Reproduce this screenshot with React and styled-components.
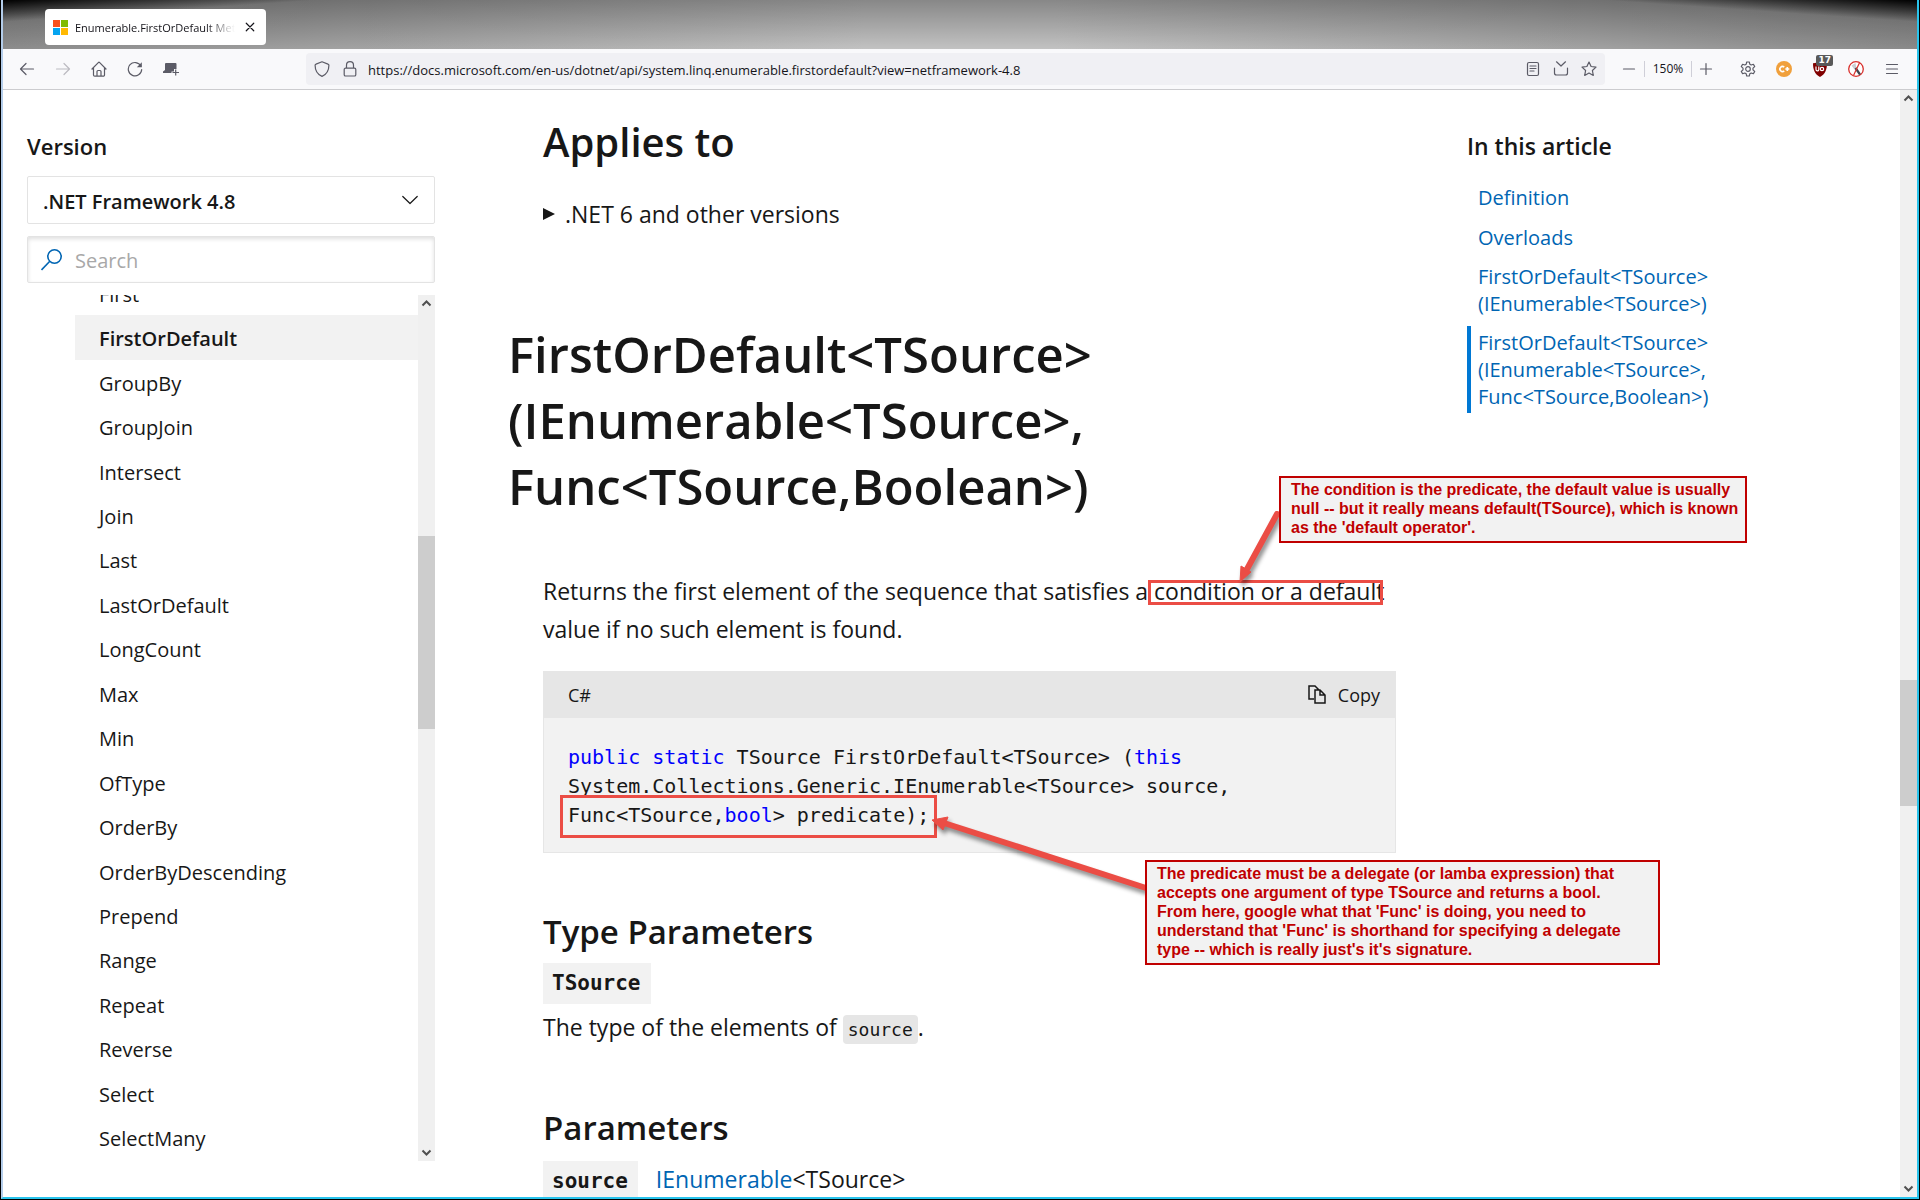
import React from "react";
import styled, { createGlobalStyle } from "styled-components";

const GlobalStyle = createGlobalStyle`
  * {
    box-sizing: border-box;
  }

  body {
    margin: 0;
    background: #000;
    color: #171717;
    font-family: "Open Sans", "Noto Sans", sans-serif;
  }

  a {
    color: #0065b3;
    text-decoration: none;
  }

  button,
  input,
  select {
    font: inherit;
    color: inherit;
  }
`;

const Desktop = styled.div`
  height: 100vh;
  padding: 0 1px 1px;
  overflow: hidden;
  background: #000;
`;

const Window = styled.div`
  height: 100%;
  display: flex;
  flex-direction: column;
  overflow: hidden;
  background: #fff;
  border-left: 2px solid #b4cdea;
  border-right: 2px solid #29c4ec;
  border-bottom: 2px solid #29c4ec;
`;

const TabStrip = styled.div`
  height: 49px;
  flex: none;
  padding: 9px 42px 4px;
  background:
    linear-gradient(176deg, #000 0, rgba(0, 0, 0, 0) 22px),
    linear-gradient(184deg, #000 0, rgba(0, 0, 0, 0) 22px),
    linear-gradient(to bottom, rgba(0, 0, 0, 0.3), rgba(0, 0, 0, 0)),
    linear-gradient(to right, #8c8c8c, #a2a2a2 18%, #c2c2c2 45%, #c2c2c2 55%, #a6a6a6 80%, #8a8a8a);
`;

const Tab = styled.div`
  width: 221px;
  height: 36px;
  padding: 0 8px;
  display: flex;
  align-items: center;
  gap: 7px;
  background: #fff;
  border-radius: 4px;
  font-size: 11px;
  color: #15141a;
`;

const TabTitle = styled.span`
  flex: 1;
  overflow: hidden;
  white-space: nowrap;
  mask-image: linear-gradient(to right, #000 82%, transparent);
`;

const IconButton = styled.button`
  width: ${(p) => p.$width || 36}px;
  height: 32px;
  padding: 0;
  flex: none;
  display: flex;
  align-items: center;
  justify-content: center;
  position: relative;
  border: 0;
  background: none;
  color: ${(p) => (p.$dim ? "#bcbbc1" : "#5b5b66")};
`;

const Toolbar = styled.div`
  height: 41px;
  flex: none;
  display: flex;
  align-items: center;
  padding: 0 7px 0 6px;
  background: #f9f9fb;
  border-bottom: 1px solid #cccccf;
`;

const AddressBar = styled.div`
  flex: 1;
  height: 32px;
  margin-left: 117px;
  margin-right: 8px;
  padding: 0 2px;
  display: flex;
  align-items: center;
  background: #f0f0f4;
  border-radius: 4px;
`;

const AddressInput = styled.input`
  flex: 1;
  min-width: 0;
  margin-left: 4px;
  padding: 2px 0 0;
  border: 0;
  outline: 0;
  background: none;
  font-size: 13px;
  color: #15141a;
`;

const ZoomLevel = styled.button`
  width: 48px;
  height: 16px;
  padding: 0;
  border: 0;
  border-left: 1px solid #cfcfd8;
  border-right: 1px solid #cfcfd8;
  background: none;
  font-size: 12px;
  line-height: 16px;
  color: #15141a;
`;

const Extensions = styled.div`
  display: flex;
  margin-left: 10px;
`;

const Badge = styled.span`
  position: absolute;
  top: 2px;
  right: 5px;
  padding: 0 2px;
  background: #595959;
  border-radius: 2px;
  color: #fff;
  font: bold 9px/11px "DejaVu Sans", sans-serif;
`;

const Page = styled.div`
  flex: 1;
  min-height: 0;
  display: flex;
`;

const Columns = styled.div`
  flex: 1;
  min-width: 0;
  display: grid;
  grid-template-columns: 408px minmax(0, 853px) minmax(0, 1fr);
  grid-template-rows: 100%;
  padding-left: 24px;
`;

const Sidebar = styled.aside`
  display: flex;
  flex-direction: column;
  padding: 40px 0 36px;
`;

const SideTitle = styled.h2`
  margin: 0;
  font-size: ${(p) => p.$size || 22}px;
  line-height: 32px;
  font-weight: 600;
`;

const Field = styled.div`
  height: ${(p) => p.$height}px;
  flex: none;
  margin-top: ${(p) => p.$gap}px;
  padding: 0 16px 0 ${(p) => (p.$inset ? 13 : 15)}px;
  display: flex;
  align-items: center;
  border: 1px solid #e3e3e3;
  border-radius: 2px;
  box-shadow: ${(p) => (p.$inset ? "inset 0 2px 4px rgba(0, 0, 0, 0.13)" : "none")};
`;

const VersionSelect = styled.select`
  flex: 1;
  appearance: none;
  border: 0;
  background: none;
  padding: 2px 0 0;
  font-size: 20px;
  font-weight: 600;
`;

const SearchInput = styled.input`
  flex: 1;
  min-width: 0;
  padding: 1px 0 0 12px;
  border: 0;
  outline: 0;
  background: none;
  font-size: 20px;

  &::placeholder {
    color: #a8a8a8;
  }
`;

const TreeArea = styled.div`
  flex: 1;
  min-height: 0;
  margin-top: 12px;
  display: flex;
`;

const TreeView = styled.div`
  flex: 1;
  overflow: hidden;
`;

const Tree = styled.ul`
  height: 889px;
  margin: -24px 0 0;
  padding: 0 0 0 48px;
  display: grid;
  grid-auto-rows: 1fr;
  list-style: none;
`;

const TreeItem = styled.a`
  height: 100%;
  padding: 2px 0 0 24px;
  display: flex;
  align-items: center;
  font-size: 20px;
  color: #171717;
  font-weight: ${(p) => (p.$active ? 600 : 400)};
  background: ${(p) => (p.$active ? "#f2f2f2" : "none")};
`;

const ScrollTrack = styled.div`
  width: 17px;
  flex: none;
  display: flex;
  flex-direction: column;
  align-items: center;
  background: #f0f0f0;
  color: #505050;
`;

const ScrollSpace = styled.div`
  flex: ${(p) => p.$grow} 1 0;
`;

const ScrollThumb = styled.div`
  width: 100%;
  flex: ${(p) => p.$grow} 1 0;
  background: #cdcdcd;
`;

const Article = styled.main`
  position: relative;
  margin-left: 108px;
  margin-right: -108px;
  padding-top: 25px;
`;

const Heading2 = styled.h2`
  margin: 0;
  font-size: 40px;
  line-height: 54px;
  font-weight: 600;
`;

const Heading1 = styled.h1`
  margin: 88px 0 0 -35px;
  font-size: 49px;
  line-height: 66px;
  font-weight: 600;
`;

const Heading3 = styled.h3`
  margin: ${(p) => p.$top}px 0 7px;
  font-size: 33px;
  line-height: 48px;
  font-weight: 600;
`;

const Versions = styled.details`
  margin-top: 26px;
  font-size: 23px;
  line-height: 38px;

  summary {
    display: flex;
    align-items: center;
    gap: 10px;
    list-style: none;
  }
`;

const Paragraph = styled.p`
  margin: ${(p) => p.$top}px 0 0;
  font-size: 23px;
  line-height: 38px;
`;

const CodeBlock = styled.section`
  margin-top: 23px;
  background: #f2f2f2;
  border: 1px solid #e6e6e6;
  border-top: 0;
`;

const CodeHeader = styled.div`
  height: 47px;
  padding: 0 15px 0 24px;
  display: flex;
  align-items: center;
  justify-content: space-between;
  background: #e6e6e6;
  font-size: 18px;
`;

const CopyButton = styled.button`
  padding: 0;
  display: flex;
  align-items: center;
  gap: 12px;
  border: 0;
  background: none;
`;

const Code = styled.pre`
  margin: 0;
  padding: 25px 24px 22px;
  font-family: "DejaVu Sans Mono", monospace;
  font-size: 20px;
  line-height: 29px;
`;

const Keyword = styled.span`
  color: #0101fd;
`;

const ParamRow = styled.div`
  display: flex;
  align-items: baseline;
  gap: 18px;
  font-size: 23px;
  line-height: 41px;
`;

const ParamName = styled.code`
  padding: 0 10px 0 9px;
  background: #f2f2f2;
  font-family: "DejaVu Sans Mono", monospace;
  font-size: 21px;
  font-weight: 700;
`;

const InlineCode = styled.code`
  padding: 4px 5px;
  background: #e6e6e6;
  border-radius: 4px;
  font-family: "DejaVu Sans Mono", monospace;
  font-size: 18px;
`;

const Contents = styled.nav`
  margin-left: 179px;
  padding-top: 40px;
`;

const ContentsLink = styled.a`
  display: block;
  width: max-content;
  margin-top: ${(p) => p.$gap}px;
  padding: 3px 0 3px 7px;
  border-left: 4px solid ${(p) => (p.$active ? "#0078d4" : "transparent")};
  font-size: 20px;
  line-height: 27px;
  font-weight: ${(p) => (p.$active ? 500 : 400)};
`;

// Notes sit above the article, so they are placed by hand
const Callout = styled.p`
  position: absolute;
  left: ${(p) => p.$left}px;
  top: ${(p) => p.$top}px;
  width: ${(p) => p.$width}px;
  margin: 0;
  padding: 2px 10px 4px;
  background: #f2f2f2;
  border: 2px solid #c00000;
  color: #c00000;
  font: bold 16px/19px "Liberation Sans", Arial, sans-serif;
  white-space: pre;
`;

const Marker = styled.div`
  position: absolute;
  left: ${(p) => p.$left}px;
  top: ${(p) => p.$top}px;
  width: ${(p) => p.$width}px;
  height: ${(p) => p.$height}px;
  border: 3px solid #eb4d45;
`;

const Arrows = styled.svg`
  position: absolute;
  left: 0;
  top: 0;
  overflow: visible;
  pointer-events: none;
  filter: drop-shadow(2px 4px 2px rgba(0, 0, 0, 0.45));
`;

const methods = [
  "First",
  "FirstOrDefault",
  "GroupBy",
  "GroupJoin",
  "Intersect",
  "Join",
  "Last",
  "LastOrDefault",
  "LongCount",
  "Max",
  "Min",
  "OfType",
  "OrderBy",
  "OrderByDescending",
  "Prepend",
  "Range",
  "Repeat",
  "Reverse",
  "Select",
  "SelectMany",
];

const Icon = ({ size = 16, width = 1.2, children }) => (
  <svg
    width={size}
    height={size}
    viewBox="0 0 16 16"
    fill="none"
    stroke="currentColor"
    strokeWidth={width}
    strokeLinecap="round"
    strokeLinejoin="round"
    aria-hidden="true"
  >
    {children}
  </svg>
);

const MicrosoftLogo = () => (
  <svg width="15" height="15" viewBox="0 0 15 15" aria-hidden="true">
    <path fill="#f8501c" d="M0 0h7v7H0z" />
    <path fill="#80bb02" d="M8 0h7v7H8z" />
    <path fill="#05a4f0" d="M0 8h7v7H0z" />
    <path fill="#ffb902" d="M8 8h7v7H8z" />
  </svg>
);

const Scrollbar = ({ before, thumb, after }) => (
  <ScrollTrack>
    <svg width="17" height="17" viewBox="0 0 17 17" aria-hidden="true">
      <path d="M4.500 10.500l4-4 4 4" fill="none" stroke="currentColor" strokeWidth="2" />
    </svg>
    <ScrollSpace $grow={before} />
    <ScrollThumb $grow={thumb} />
    <ScrollSpace $grow={after} />
    <svg width="17" height="17" viewBox="0 0 17 17" aria-hidden="true">
      <path d="M4.500 6.500l4 4 4-4" fill="none" stroke="currentColor" strokeWidth="2" />
    </svg>
  </ScrollTrack>
);

const BrowserToolbar = () => (
  <Toolbar>
    <IconButton aria-label="Back">
      <Icon><path d="M14.500 8h-13M7 2.500L1.500 8 7 13.500" /></Icon>
    </IconButton>
    <IconButton aria-label="Forward" $dim>
      <Icon><path d="M1.500 8h13M9 2.500L14.500 8 9 13.500" /></Icon>
    </IconButton>
    <IconButton aria-label="Home">
      <Icon><path d="M1 8l6.300-6.400a1 1 0 0 1 1.400 0L15 8M2.500 6.800V14a1.200 1.200 0 0 0 1.200 1.200h8.600A1.200 1.200 0 0 0 13.500 14V6.800M6 15v-4.500a1 1 0 0 1 1-1h2a1 1 0 0 1 1 1V15" /></Icon>
    </IconButton>
    <IconButton aria-label="Reload">
      <Icon>
        <path d="M13.900 5A6.700 6.700 0 1 0 14.700 8.500" />
        <path d="M14.800 1.300v5h-5z" fill="currentColor" stroke="none" />
      </Icon>
    </IconButton>
    <IconButton aria-label="New window">
      <svg width="16" height="16" viewBox="0 0 16 16" aria-hidden="true">
        <path d="M3 2h9.500a1 1 0 0 1 1 1v5H11v2.500H8.500V12H0v-1.500L2 9V3a1 1 0 0 1 1-1z" fill="currentColor" />
        <path d="M9.500 11.500h6.500M12.700 8.500v6" stroke="currentColor" strokeWidth="1.200" />
      </svg>
    </IconButton>
    <AddressBar>
      <IconButton aria-label="Tracking protection" $width={28}>
        <Icon><path d="M8 .8l6 2.300c.6.200.9.600.9 1.200C14.900 9.500 12.500 13.500 8 15.400 3.500 13.500 1.100 9.500 1.100 4.300c0-.6.300-1 .9-1.200z" /></Icon>
      </IconButton>
      <IconButton aria-label="Connection" $width={28}>
        <Icon><path d="M4.500 7V4.200a3.500 3.500 0 0 1 7 0V7M3.500 7.200h9a1.300 1.300 0 0 1 1.300 1.300v5.200a1.300 1.300 0 0 1-1.300 1.300h-9a1.300 1.300 0 0 1-1.300-1.300V8.500a1.300 1.300 0 0 1 1.300-1.300z" /></Icon>
      </IconButton>
      <AddressInput
        aria-label="Address"
        defaultValue="https://docs.microsoft.com/en-us/dotnet/api/system.linq.enumerable.firstordefault?view=netframework-4.8"
      />
      <IconButton aria-label="Reader view" $width={28}>
        <Icon><path d="M4 1.500h8a1.500 1.500 0 0 1 1.500 1.500v10a1.500 1.500 0 0 1-1.500 1.500H4A1.500 1.500 0 0 1 2.500 13V3A1.500 1.500 0 0 1 4 1.500zM5 5h6M5 7.500h6M5 10h4" /></Icon>
      </IconButton>
      <IconButton aria-label="Save" $width={28}>
        <Icon><path d="M3.500 .8L8 5 12.500 .8M1.500 7v5a2 2 0 0 0 2 2h9a2 2 0 0 0 2-2V7" /></Icon>
      </IconButton>
      <IconButton aria-label="Bookmark" $width={28}>
        <Icon><path d="M8 1l2.100 4.500 4.900.6-3.600 3.400.9 4.900L8 12l-4.300 2.400.9-4.900L1 6.100l4.900-.6z" /></Icon>
      </IconButton>
    </AddressBar>
    <IconButton aria-label="Zoom out" $width={31}>
      <Icon><path d="M2.500 8h11" /></Icon>
    </IconButton>
    <ZoomLevel>150%</ZoomLevel>
    <IconButton aria-label="Zoom in" $width={28}>
      <Icon><path d="M2.500 8h11M8 2.500v11" /></Icon>
    </IconButton>
    <Extensions>
      <IconButton aria-label="Settings">
        <Icon>
          <circle cx="8" cy="8" r="2.300" />
          <path d="M6.700 1h2.600l.5 2.200 1.400.8 2.200-.7 1.300 2.300-1.700 1.500v1.800l1.700 1.500-1.300 2.300-2.200-.7-1.400.8-.5 2.200H6.700l-.5-2.200-1.400-.8-2.200.7-1.300-2.300L3 8.900V7.100L1.300 5.600l1.300-2.300 2.200.7 1.400-.8z" />
        </Icon>
      </IconButton>
      <IconButton aria-label="Containers">
        <svg width="16" height="16" viewBox="0 0 16 16" aria-hidden="true">
          <circle cx="8" cy="8" r="8" fill="#f0a03c" />
          <path d="M8.200 6.200a2.500 2.500 0 1 0 0 3.600M9.300 8h4M11.300 6v4" fill="none" stroke="#fff" strokeWidth="1.700" />
        </svg>
      </IconButton>
      <IconButton aria-label="Content blocker">
        <svg width="16" height="16" viewBox="0 0 16 16" aria-hidden="true">
          <path d="M8 0c2 1.500 4 2 7 2.200C15 8 13.500 13 8 16 2.500 13 1 8 1 2.200 4 2 6 1.500 8 0z" fill="#800000" />
          <path d="M4 5.500v3a1.400 1.400 0 0 0 2.800 0v-3" fill="none" stroke="#fff" strokeWidth="1.200" />
          <circle cx="10" cy="8" r="1.700" fill="none" stroke="#fff" strokeWidth="1.200" />
        </svg>
        <Badge>17</Badge>
      </IconButton>
      <IconButton aria-label="Script filter">
        <svg width="16" height="16" viewBox="0 0 16 16" aria-hidden="true">
          <circle cx="8" cy="8" r="7.300" fill="#fff" stroke="#d9302c" strokeWidth="1.300" />
          <path d="M3.500 4.500L7.500 2l1 6-2 .5z" fill="#c9ced2" />
          <path d="M7.500 7l4.500 6.500" stroke="#3c4650" strokeWidth="2.200" />
          <path d="M11.500 1.800L5.500 14.500" stroke="#d9302c" strokeWidth="1.200" />
        </svg>
      </IconButton>
      <IconButton aria-label="Menu">
        <Icon><path d="M2.500 3.500h11M2.500 8h11M2.500 12.500h11" /></Icon>
      </IconButton>
    </Extensions>
  </Toolbar>
);

const SideNavigation = () => (
  <Sidebar>
    <SideTitle as="label" htmlFor="version">Version</SideTitle>
    <Field $height={48} $gap={14}>
      <VersionSelect id="version">
        <option>.NET Framework 4.8</option>
      </VersionSelect>
      <Icon width={1.2}><path d="M.8 4.500L8 11.500l7.200-7" /></Icon>
    </Field>
    <Field $height={47} $gap={12} $inset>
      <svg width="22" height="22" viewBox="0 0 22 22" fill="none" stroke="#0065b3" strokeWidth="1.600" aria-hidden="true">
        <circle cx="13.500" cy="7.500" r="6.700" />
        <path d="M8.800 12.300L.5 21" />
      </svg>
      <SearchInput aria-label="Search" placeholder="Search" />
    </Field>
    <TreeArea>
      <TreeView>
        <Tree>
          {methods.map((name) => (
            <li key={name}>
              <TreeItem href="#" $active={name === "FirstOrDefault"}>{name}</TreeItem>
            </li>
          ))}
        </Tree>
      </TreeView>
      <Scrollbar before={224} thumb={193} after={415} />
    </TreeArea>
  </Sidebar>
);

const ArticleNotes = () => (
  <>
    <Marker $left={605} $top={490} $width={235} $height={25} />
    <Marker $left={17} $top={705} $width={377} $height={43} />
    <Arrows width="1" height="1" aria-hidden="true">
      <g fill="#eb4d45" stroke="#eb4d45">
        <path d="M734 424L703 481" strokeWidth="6" strokeLinecap="round" />
        <path d="M697 492l1-16 10 6z" />
        <path d="M603 798L401 733" strokeWidth="6" />
        <path d="M389 730l16-3-5 13z" />
      </g>
    </Arrows>
    <Callout $left={736} $top={386} $width={468}>
      {"The condition is the predicate, the default value is usually\nnull -- but it really means default(TSource), which is known\nas the 'default operator'."}
    </Callout>
    <Callout $left={602} $top={770} $width={515}>
      {"The predicate must be a delegate (or lamba expression) that\naccepts one argument of type TSource and returns a bool.\nFrom here, google what that 'Func' is doing, you need to\nunderstand that 'Func' is shorthand for specifying a delegate\ntype -- which is really just's it's signature."}
    </Callout>
  </>
);

const DocArticle = () => (
  <Article>
    <Heading2>Applies to</Heading2>
    <Versions>
      <summary>
        <svg width="12" height="12" viewBox="0 0 12 12" aria-hidden="true">
          <path d="M0 0l12 6-12 6z" fill="currentColor" />
        </svg>
        .NET 6 and other versions
      </summary>
    </Versions>
    <Heading1>
      FirstOrDefault&lt;TSource&gt;
      <br />
      (IEnumerable&lt;TSource&gt;,
      <br />
      Func&lt;TSource,Boolean&gt;)
    </Heading1>
    <Paragraph $top={53}>
      Returns the first element of the sequence that satisfies a condition or a default
      <br />
      value if no such element is found.
    </Paragraph>
    <CodeBlock>
      <CodeHeader>
        <span>C#</span>
        <CopyButton>
          <svg width="18" height="19" viewBox="0 0 18 19" fill="none" stroke="currentColor" strokeWidth="1.500" aria-hidden="true">
            <path d="M6 14H1V1h6l4 4M7 5h5l5 5v8H7zM12 5v5h5" />
          </svg>
          Copy
        </CopyButton>
      </CodeHeader>
      <Code>
        <Keyword>public</Keyword> <Keyword>static</Keyword>
        {" TSource FirstOrDefault<TSource> ("}
        <Keyword>this</Keyword>
        {"\nSystem.Collections.Generic.IEnumerable<TSource> source,\nFunc<TSource,"}
        <Keyword>bool</Keyword>
        {"> predicate);"}
      </Code>
    </CodeBlock>
    <Heading3 $top={55}>Type Parameters</Heading3>
    <ParamRow>
      <ParamName>TSource</ParamName>
    </ParamRow>
    <Paragraph $top={4}>
      The type of the elements of <InlineCode>source</InlineCode>.
    </Paragraph>
    <Heading3 $top={55}>Parameters</Heading3>
    <ParamRow>
      <ParamName>source</ParamName>
      <span>
        <a href="#">IEnumerable</a>&lt;TSource&gt;
      </span>
    </ParamRow>
    <ArticleNotes />
  </Article>
);

const App = () => (
  <Desktop>
    <GlobalStyle />
    <Window>
      <TabStrip>
        <Tab>
          <MicrosoftLogo />
          <TabTitle>Enumerable.FirstOrDefault Method (System.Linq)</TabTitle>
          <IconButton aria-label="Close tab" $width={16}>
            <Icon size={12} width={1.6}><path d="M3 3l10 10M13 3L3 13" stroke="#15141a" /></Icon>
          </IconButton>
        </Tab>
      </TabStrip>
      <BrowserToolbar />
      <Page>
        <Columns>
          <SideNavigation />
          <DocArticle />
          <Contents>
            <SideTitle $size={23}>In this article</SideTitle>
            <ContentsLink href="#" $gap={19}>Definition</ContentsLink>
            <ContentsLink href="#" $gap={7}>Overloads</ContentsLink>
            <ContentsLink href="#" $gap={6}>
              FirstOrDefault&lt;TSource&gt;
              <br />
              (IEnumerable&lt;TSource&gt;)
            </ContentsLink>
            <ContentsLink href="#" $gap={6} $active>
              FirstOrDefault&lt;TSource&gt;
              <br />
              (IEnumerable&lt;TSource&gt;,
              <br />
              Func&lt;TSource,Boolean&gt;)
            </ContentsLink>
          </Contents>
        </Columns>
        <Scrollbar before={573} thumb={126} after={374} />
      </Page>
    </Window>
  </Desktop>
);

export default App;
